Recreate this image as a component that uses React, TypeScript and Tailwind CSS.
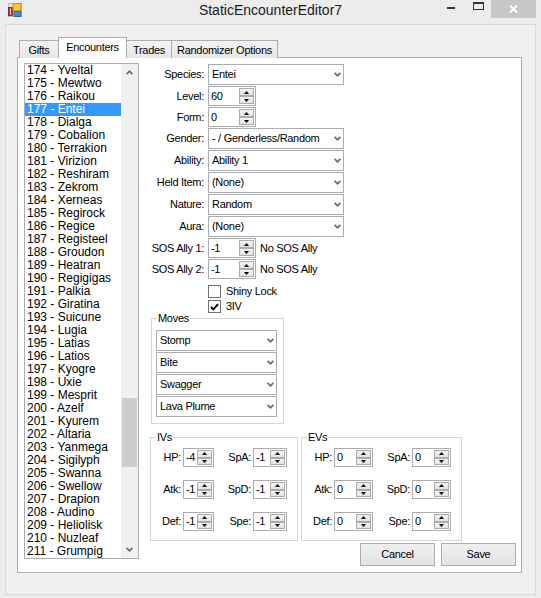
import type { ReactNode } from "react";

const SPECIES = [
  "174 - Yveltal",
  "175 - Mewtwo",
  "176 - Raikou",
  "177 - Entei",
  "178 - Dialga",
  "179 - Cobalion",
  "180 - Terrakion",
  "181 - Virizion",
  "182 - Reshiram",
  "183 - Zekrom",
  "184 - Xerneas",
  "185 - Regirock",
  "186 - Regice",
  "187 - Registeel",
  "188 - Groudon",
  "189 - Heatran",
  "190 - Regigigas",
  "191 - Palkia",
  "192 - Giratina",
  "193 - Suicune",
  "194 - Lugia",
  "195 - Latias",
  "196 - Latios",
  "197 - Kyogre",
  "198 - Uxie",
  "199 - Mesprit",
  "200 - Azelf",
  "201 - Kyurem",
  "202 - Altaria",
  "203 - Yanmega",
  "204 - Sigilyph",
  "205 - Swanna",
  "206 - Swellow",
  "207 - Drapion",
  "208 - Audino",
  "209 - Heliolisk",
  "210 - Nuzleaf",
  "211 - Grumpig",
];

function AppIcon() {
  return (
    <svg width="14" height="14" viewBox="0 0 14 14">
      <rect x="0.5" y="0.5" width="13" height="13" fill="#e2e2e2" stroke="#bdbdbd" />
      <rect x="0.5" y="4.5" width="4" height="8" fill="#d22b2b" stroke="#8d1616" strokeWidth="0.8" />
      <rect x="2" y="5.5" width="1" height="6" fill="#f3dede" />
      <rect x="5" y="0.5" width="8" height="7.5" fill="#f6c530" stroke="#c48a00" strokeWidth="0.8" />
      <rect x="6" y="8.5" width="7" height="5" fill="#4a86e0" stroke="#22579f" strokeWidth="0.8" />
    </svg>
  );
}

function Chevron({ up = false }: { up?: boolean }) {
  return (
    <svg width="7" height="5" viewBox="0 0 7 5" className={up ? "rotate-180" : ""}>
      <path d="M0.6 0.9 L3.5 3.8 L6.4 0.9" fill="none" stroke="#666666" strokeWidth="1.6" />
    </svg>
  );
}

function Tri({ down = false }: { down?: boolean }) {
  return (
    <svg width="5" height="3" viewBox="0 0 5 3">
      <path d={down ? "M0 0H5L2.5 3Z" : "M0 3H5L2.5 0Z"} fill="#000" />
    </svg>
  );
}

function Combo({ value, className }: { value: string; className: string }) {
  return (
    <div className={`flex items-center border border-[#abadb3] bg-white ${className}`}>
      <span className="flex-1 truncate pl-[3px]">{value}</span>
      <span className="mr-[2px] flex">
        <Chevron />
      </span>
    </div>
  );
}

function Numeric({ value, className }: { value: string; className: string }) {
  return (
    <div className={`flex border border-[#abadb3] bg-white ${className}`}>
      <span className="flex-1 self-center pl-[2px]">{value}</span>
      <div className="my-[1px] mr-[1px] flex w-[15px] flex-col">
        <div className="flex flex-1 items-center justify-center border border-[#acacac] bg-linear-to-b from-[#f4f4f4] to-[#e2e2e2]">
          <Tri />
        </div>
        <div className="flex flex-1 items-center justify-center border border-[#acacac] bg-linear-to-b from-[#f4f4f4] to-[#e2e2e2]">
          <Tri down />
        </div>
      </div>
    </div>
  );
}

function CheckBox({ checked, label, className }: { checked: boolean; label: string; className: string }) {
  return (
    <div className={`ml-[69px] flex items-center ${className}`}>
      <div className="flex h-[13px] w-[13px] items-center justify-center border border-[#707070] bg-white">
        {checked && (
          <svg width="9" height="8" viewBox="0 0 9 8">
            <path d="M1 4 L3.4 6.4 L8 1.2" fill="none" stroke="#000" strokeWidth="2" />
          </svg>
        )}
      </div>
      <span className="ml-[5px]">{label}</span>
    </div>
  );
}

function Row({ label, className, children }: { label: string; className: string; children: ReactNode }) {
  return (
    <div className={`flex items-center ${className}`}>
      <div className="w-[65px] text-right whitespace-nowrap">{label}</div>
      <div className="ml-[4px] flex items-center">{children}</div>
    </div>
  );
}

function GroupBox({ title, className, children }: { title: string; className: string; children: ReactNode }) {
  return (
    <div className={`relative border border-[#d5d5d5] ${className}`}>
      <span className="absolute -top-[7px] left-[5px] bg-white px-[1px] leading-[13px]">{title}</span>
      {children}
    </div>
  );
}

function StatRow({
  a,
  av,
  b,
  bv,
  boxA,
  boxB,
}: {
  a: string;
  av: string;
  b: string;
  bv: string;
  boxA: string;
  boxB: string;
}) {
  return (
    <div className="flex items-center">
      <div className="w-[30px] text-right">{a}</div>
      <Numeric value={av} className={`ml-[2px] h-[19px] ${boxA}`} />
      <div className="w-[37px] text-right">{b}</div>
      <Numeric value={bv} className={`ml-[2px] h-[19px] ${boxB}`} />
    </div>
  );
}

function Tab({ label, active = false, className }: { label: string; active?: boolean; className: string }) {
  if (active) {
    return (
      <div
        className={`relative z-10 flex h-[21px] justify-center border-x border-t border-[#acacac] bg-white pt-[3px] leading-[13px] ${className}`}
      >
        {label}
      </div>
    );
  }
  return (
    <div
      className={`flex h-[18px] justify-center border-x border-t border-[#acacac] bg-linear-to-b from-[#f3f3f3] to-[#e6e6e6] pt-[3px] leading-[13px] ${className}`}
    >
      {label}
    </div>
  );
}

export default function App() {
  return (
    <div className="h-[598px] w-[541px] overflow-hidden bg-[#ececec] font-['Liberation_Sans',Arial,sans-serif] text-[11px] leading-none tracking-[-0.3px] text-black">
      {/* title bar */}
      <div className="grid h-[24px] grid-cols-[1fr_auto_1fr]">
        <div className="pl-[8px] pt-[3px]">
          <AppIcon />
        </div>
        <div className="mt-[2px] text-[14px] leading-[16px] tracking-normal text-[#1a1a1a]">
          StaticEncounterEditor7
        </div>
        <div className="flex items-start justify-end pr-[5px]">
          <div className="mr-[18px] mt-[7px] h-[2px] w-[8px] bg-[#333]" />
          <div className="mr-[7px] mt-[2px] h-[8px] w-[11px] border border-t-2 border-[#333]" />
          <div className="flex h-[18px] w-[45px] items-center justify-center bg-[#c7c7c7]">
            <svg width="9" height="8" viewBox="0 0 9 8">
              <path d="M1 0.5 L8 7.5 M8 0.5 L1 7.5" stroke="#fff" strokeWidth="1.8" />
            </svg>
          </div>
        </div>
      </div>

      {/* client area */}
      <div className="ml-[5px] h-[571px] w-[531px] border border-[#d9d9d9] bg-[#f0f0f0] pl-[11px] pt-[12px]">
        <div className="w-[505px]">
          <div className="flex h-[21px] items-end pl-[2px]">
            <Tab label="Gifts" className="w-[40px]" />
            <Tab label="Encounters" active className="-ml-px w-[69px]" />
            <Tab label="Trades" className="-ml-px w-[46px]" />
            <Tab label="Randomizer Options" className="-ml-px w-[107px]" />
          </div>

          <div className="-mt-px flex h-[516px] border border-[#acacac] bg-white">
            {/* species list */}
            <div className="ml-[6px] mt-[5px] flex h-[496px] w-[115px] border border-[#abadb3] bg-white">
              <div className="flex-1 overflow-hidden text-[12px] tracking-normal">
                {SPECIES.map((s) => (
                  <div
                    key={s}
                    className={`h-[13px] whitespace-nowrap pl-[2px] leading-[13px] ${
                      s === "177 - Entei" ? "bg-[#3399ff] text-white" : ""
                    }`}
                  >
                    {s}
                  </div>
                ))}
              </div>
              <div className="flex w-[17px] flex-col bg-[#f0f0f0]">
                <div className="flex h-[17px] items-center justify-center">
                  <Chevron up />
                </div>
                <div className="flex-1">
                  <div className="mx-[1px] mt-[317px] h-[69px] bg-[#cdcdcd]" />
                </div>
                <div className="flex h-[17px] items-center justify-center">
                  <Chevron />
                </div>
              </div>
            </div>

            {/* editor fields */}
            <div className="mt-[6px] flex flex-col">
              <Row label="Species:" className="">
                <Combo value="Entei" className="h-[21px] w-[136px]" />
              </Row>
              <Row label="Level:" className="mt-[1px]">
                <Numeric value="60" className="h-[20px] w-[48px]" />
              </Row>
              <Row label="Form:" className="mt-[1px]">
                <Numeric value="0" className="h-[20px] w-[48px]" />
              </Row>
              <Row label="Gender:" className="mt-[1px]">
                <Combo value="- / Genderless/Random" className="h-[21px] w-[136px]" />
              </Row>
              <Row label="Ability:" className="mt-[1px]">
                <Combo value="Ability 1" className="h-[21px] w-[136px]" />
              </Row>
              <Row label="Held Item:" className="mt-[1px]">
                <Combo value="(None)" className="h-[21px] w-[136px]" />
              </Row>
              <Row label="Nature:" className="mt-[1px]">
                <Combo value="Random" className="h-[21px] w-[136px]" />
              </Row>
              <Row label="Aura:" className="mt-[1px]">
                <Combo value="(None)" className="h-[21px] w-[136px]" />
              </Row>
              <Row label="SOS Ally 1:" className="mt-[1px]">
                <Numeric value="-1" className="h-[20px] w-[48px]" />
                <span className="ml-[4px]">No SOS Ally</span>
              </Row>
              <Row label="SOS Ally 2:" className="mt-[1px]">
                <Numeric value="-1" className="h-[20px] w-[48px]" />
                <span className="ml-[4px]">No SOS Ally</span>
              </Row>
              <CheckBox checked={false} label="Shiny Lock" className="mt-[6px]" />
              <CheckBox checked label="3IV" className="mt-[2px]" />

              <GroupBox title="Moves" className="ml-[12px] mt-[5px] h-[106px] w-[133px]">
                <div className="ml-[4px] mt-[11px] flex flex-col gap-[1px]">
                  {["Stomp", "Bite", "Swagger", "Lava Plume"].map((m) => (
                    <Combo key={m} value={m} className="h-[21px] w-[121px]" />
                  ))}
                </div>
              </GroupBox>

              <div className="mt-[13px] flex">
                <GroupBox title="IVs" className="ml-[11px] h-[104px] w-[148px]">
                  <div className="flex flex-col gap-[13px] pt-[10px]">
                    <StatRow a="HP:" av="-4" b="SpA:" bv="-1" boxA="w-[31px]" boxB="w-[34px]" />
                    <StatRow a="Atk:" av="-1" b="SpD:" bv="-1" boxA="w-[31px]" boxB="w-[34px]" />
                    <StatRow a="Def:" av="-1" b="Spe:" bv="-1" boxA="w-[31px]" boxB="w-[34px]" />
                  </div>
                </GroupBox>
                <GroupBox title="EVs" className="ml-[3px] h-[104px] w-[161px]">
                  <div className="flex flex-col gap-[13px] pt-[10px]">
                    <StatRow a="HP:" av="0" b="SpA:" bv="0" boxA="w-[39px]" boxB="w-[39px]" />
                    <StatRow a="Atk:" av="0" b="SpD:" bv="0" boxA="w-[39px]" boxB="w-[39px]" />
                    <StatRow a="Def:" av="0" b="Spe:" bv="0" boxA="w-[39px]" boxB="w-[39px]" />
                  </div>
                </GroupBox>
              </div>

              <div className="ml-[221px] mt-[2px] flex gap-[6px]">
                {["Cancel", "Save"].map((b) => (
                  <div
                    key={b}
                    className="flex h-[23px] w-[75px] items-center justify-center border border-[#acacac] bg-linear-to-b from-[#f0f0f0] to-[#e3e3e3]"
                  >
                    {b}
                  </div>
                ))}
              </div>
            </div>
          </div>
        </div>
      </div>
    </div>
  );
}
